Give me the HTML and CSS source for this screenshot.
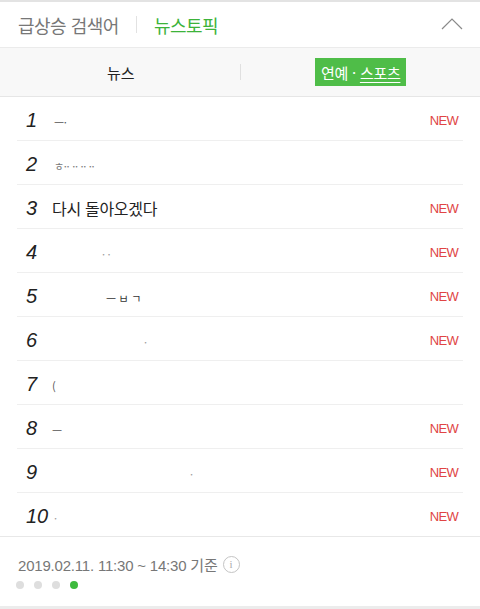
FILE: index.html
```html
<!DOCTYPE html>
<html lang="ko">
<head>
<meta charset="utf-8">
<link rel="stylesheet" href="styles.css">
</head>
<body>
<div class="wrap">
  <div class="head">
    <span class="tab-off">급상승 검색어</span>
    <span class="vbar"></span>
    <span class="tab-on">뉴스토픽</span>
    <svg class="chev" width="22" height="12" viewBox="0 0 22 12"><polyline points="1,11 11,1 21,11" fill="none" stroke="#8a8a8a" stroke-width="1.2"/></svg>
  </div>
  <div class="tabs">
    <div class="half"><span class="sub">뉴스</span></div>
    <span class="tbar"></span>
    <div class="half"><span class="sub-on">연예 · <u>스포츠</u></span></div>
  </div>
  <ol class="list">
    <li class="row"><span class="num">1</span><span class="title"><span class="frag f1">ㅡ·</span></span><span class="new">NEW</span></li>
    <li class="row"><span class="num">2</span><span class="title"><span class="frag f2">ㅎ·· ·· ·· ··</span></span></li>
    <li class="row"><span class="num">3</span><span class="title">다시 돌아오겠다</span><span class="new">NEW</span></li>
    <li class="row"><span class="num">4</span><span class="title"><span class="frag f4">· ·</span></span><span class="new">NEW</span></li>
    <li class="row"><span class="num">5</span><span class="title"><span class="frag f5">ㅡ ㅂ ㄱ</span></span><span class="new">NEW</span></li>
    <li class="row"><span class="num">6</span><span class="title"><span class="frag f6">·</span></span><span class="new">NEW</span></li>
    <li class="row"><span class="num">7</span><span class="title"><span class="frag">(</span></span></li>
    <li class="row"><span class="num">8</span><span class="title"><span class="frag">ᅳ</span></span><span class="new">NEW</span></li>
    <li class="row"><span class="num">9</span><span class="title"><span class="frag f9">·</span></span><span class="new">NEW</span></li>
    <li class="row"><span class="num">10</span><span class="title"><span class="frag f10">·</span></span><span class="new">NEW</span></li>
  </ol>
  <div class="foot">
    <div class="stamp">2019.02.11. 11:30 ~ 14:30 기준 <span class="info">i</span></div>
    <div class="dots"><span class="dot"></span><span class="dot"></span><span class="dot"></span><span class="dot on"></span></div>
  </div>
</div>
</body>
</html>
```
FILE: styles.css
```css
* { box-sizing: border-box; }
html, body { margin: 0; padding: 0; background: #fff; }
body { width: 480px; height: 609px; overflow: hidden; font-family: "Noto Sans CJK KR", "Noto Sans", sans-serif; }
.wrap { border-top: 2px solid #e3e3e3; height: 609px; border-bottom: 3px solid #ececec; }
.head { height: 46px; display: flex; align-items: center; padding: 0 18px 0 18px; border-bottom: 1px solid #ebebeb; }
.tab-off { font-size: 18px; color: #777; letter-spacing: -0.5px; }
.tab-on { font-size: 18px; color: #3db33a; letter-spacing: -0.5px; }
.vbar { width: 1px; height: 17px; background: #e2e2e2; margin: 0 17px 0 17px; }
.chev { margin-left: auto; margin-right: -1px; margin-top: -2px; }
.tabs { height: 49px; background: #f8f8f8; display: flex; align-items: center; border-bottom: 1px solid #e6e6e6; }
.half { flex: 1; display: flex; justify-content: center; align-items: center; }
.tbar { width: 1px; height: 16px; background: #e0e0e0; }
.sub { font-size: 15px; color: #222; margin-left: 2px; }
.sub-on { background: #4fbd48; color: #fff; font-size: 15px; height: 28px; width: 91px; display: flex; align-items: center; justify-content: center; margin-left: 1px; letter-spacing: -0.3px; }
.sub-on u { text-underline-offset: 3px; margin-left: 4px; }
.list { list-style: none; margin: 0; padding: 0; }
.row { height: 44px; margin: 0 17px; border-bottom: 1px solid #efefef; display: flex; align-items: center; padding: 3px 5px 0 9px; }
.row:last-child { margin: 0; padding: 3px 22px 0 26px; border-bottom: 1px solid #e8e8e8; }
.num { font-family: "Liberation Sans", Arial, sans-serif; font-style: italic; font-size: 20px; color: #222; width: 26px; }
.title { flex: 1; font-size: 16px; color: #222; letter-spacing: -0.3px; }
.frag { color: #555; font-size: 11px; }
.f1 { margin-left: 2px; }
.f2 { margin-left: 2px; color: #777; }
.f4 { margin-left: 50px; color: #999; }
.f5 { margin-left: 54px; color: #333; }
.f6 { margin-left: 92px; color: #999; }
.f9 { margin-left: 138px; color: #999; }
.f10 { margin-left: 2px; color: #999; }
.new { font-family: "Liberation Sans", Arial, sans-serif; font-size: 13px; color: #e04444; letter-spacing: -0.7px; }
.foot { padding: 16px 18px 0 18px; }
.stamp { font-family: "Liberation Sans", "Noto Sans CJK KR", sans-serif; font-size: 15px; color: #777; display: flex; align-items: center; letter-spacing: -0.2px; height: 22px; }
.info { width: 17px; height: 17px; border: 1px solid #c4c4c4; border-radius: 50%; font-size: 11px; color: #aaa; display: inline-flex; align-items: center; justify-content: center; margin-left: 5px; font-family: "Liberation Serif", serif; }
.dots { display: flex; gap: 10px; margin-top: 6px; margin-left: -2px; }
.dot { width: 8px; height: 8px; border-radius: 50%; background: #dedede; }
.dot.on { background: #3dba3d; }
```
